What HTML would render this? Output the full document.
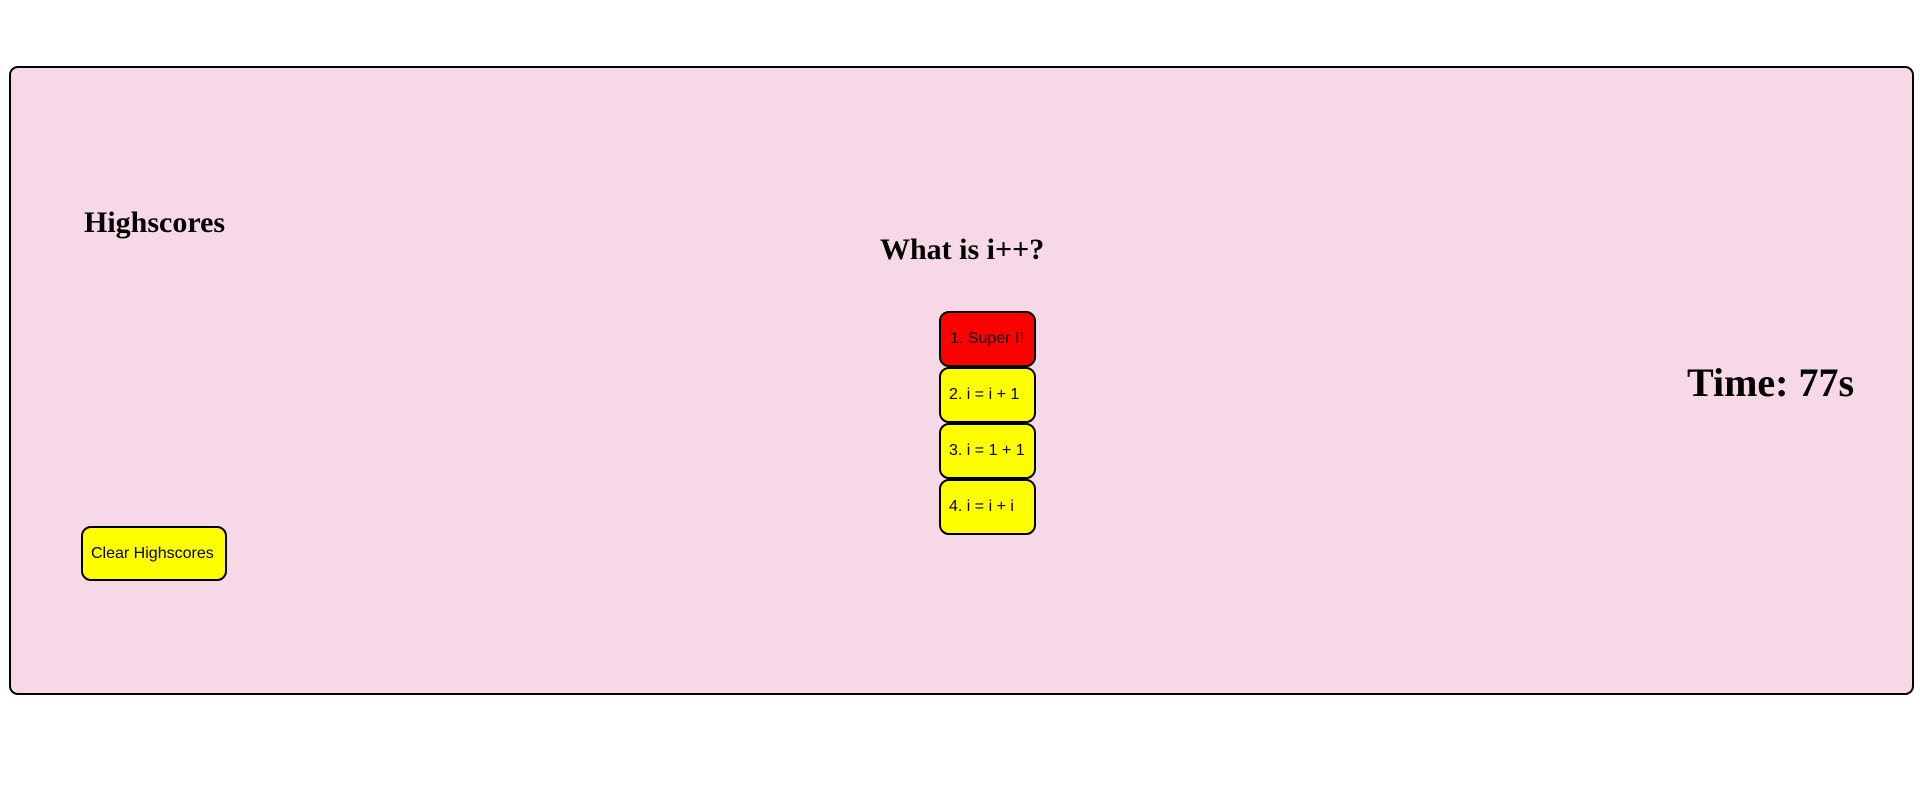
<!DOCTYPE html>
<html><head><style>
html,body{margin:0;padding:0;background:#fff;width:1920px;height:806px;overflow:hidden}
.box{position:absolute;left:9px;top:66px;width:1901px;height:625px;border:2.5px solid #000;border-radius:9px;background:#f6d8e7}
.h{position:absolute;font-family:"Liberation Serif",serif;font-weight:bold;color:#000;white-space:nowrap;line-height:1}
.b{position:absolute;box-sizing:border-box;border:2px solid #000;border-radius:10px;font-family:"Liberation Sans",sans-serif;font-size:16px;display:flex;align-items:center;background:#ff0;white-space:nowrap;color:#000}
</style></head><body>
<div class="box"></div>
<div class="h" style="left:84px;top:208px;font-size:30px">Highscores</div>
<div class="h" style="left:880px;top:235px;font-size:30px">What is i++?</div>
<div class="h" style="left:1687px;top:363px;font-size:40px">Time: 77s</div>
<div class="b" style="left:939px;top:311px;width:97px;height:56px;background:#f00;padding-left:9px">1. Super I!</div>
<div class="b" style="left:939px;top:367px;width:97px;height:56px;padding-left:8px">2. i = i + 1</div>
<div class="b" style="left:939px;top:423px;width:97px;height:56px;padding-left:8px">3. i = 1 + 1</div>
<div class="b" style="left:939px;top:479px;width:97px;height:56px;padding-left:8px">4. i = i + i</div>
<div class="b" style="left:81px;top:526px;width:146px;height:55px;padding-left:8px">Clear Highscores</div>
</body></html>
